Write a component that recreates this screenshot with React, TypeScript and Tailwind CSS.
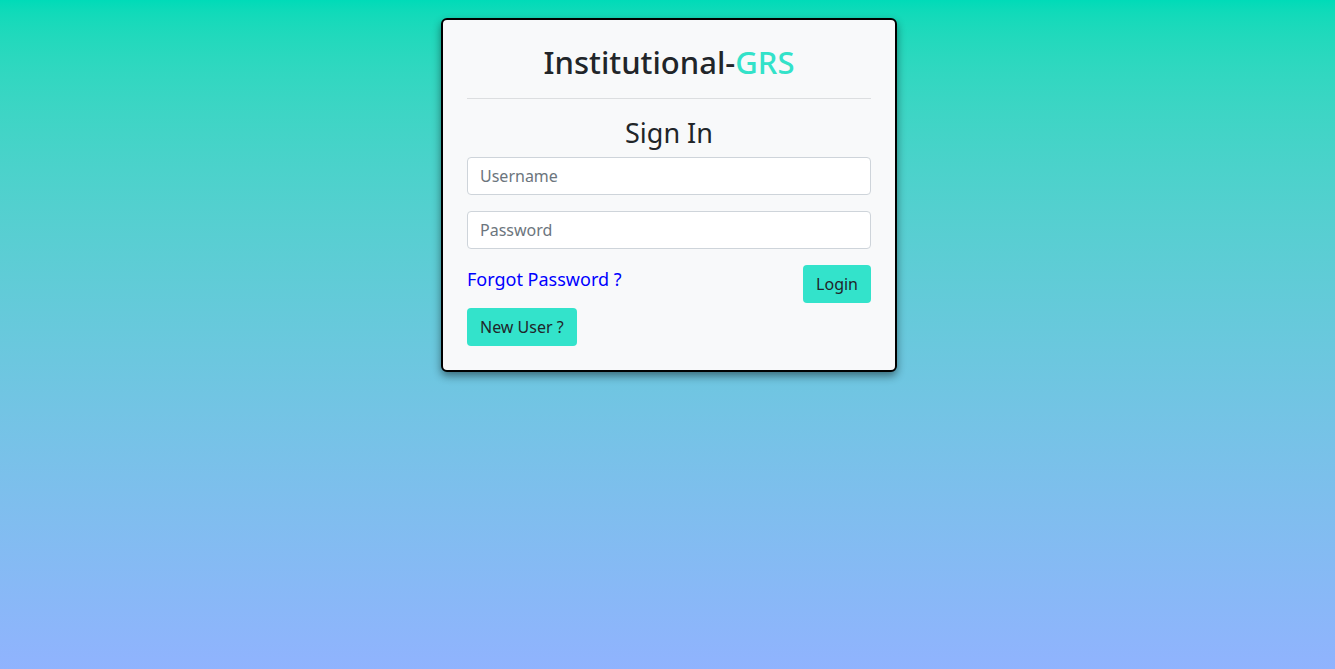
import React from "react";

export default function App() {
  return (
    <div
      className="min-h-screen w-full bg-gradient-to-b from-[#00dbb8] to-[#90b3fe] flex justify-center pl-[3px]"
      style={{ fontFamily: '"Noto Sans", "Open Sans", sans-serif' }}
    >
      <div className="mt-[18px] w-[456px] self-start rounded-[6px] border-2 border-black bg-[#f8f9fa] px-[24px] pt-[19px] pb-[24px] shadow-[0_4px_8px_rgba(0,0,0,0.45)]">
        <h1 className="text-center text-[31px] font-medium leading-[46px] text-[#212529]">
          Institutional-<span className="text-[#33e2c9]">GRS</span>
        </h1>
        <hr className="mt-[13px] border-t border-[#dcdee0]" />
        <h2 className="mt-[17px] text-center text-[27px] leading-[34px] text-[#212529]">Sign In</h2>
        <input
          className="mt-[7px] block h-[38px] w-full rounded-[4px] border border-[#ced4da] bg-white px-[12px] text-[16px] text-[#495057] placeholder:text-[#6c757d] outline-none"
          placeholder="Username"
        />
        <input
          type="password"
          className="mt-[16px] block h-[38px] w-full rounded-[4px] border border-[#ced4da] bg-white px-[12px] text-[16px] text-[#495057] placeholder:text-[#6c757d] outline-none"
          placeholder="Password"
        />
        <div className="mt-[16px] flex items-start justify-between">
          <a href="#" className="mt-[1px] text-[18px] leading-[26px] text-[#0000ff]">
            Forgot Password ?
          </a>
          <button className="h-[38px] rounded-[4px] bg-[#33e3cb] px-[13px] text-[16px] text-[#212529]">
            Login
          </button>
        </div>
        <button className="mt-[5px] h-[38px] rounded-[4px] bg-[#33e3cb] px-[13px] text-[16px] text-[#212529]">
          New User ?
        </button>
      </div>
    </div>
  );
}
